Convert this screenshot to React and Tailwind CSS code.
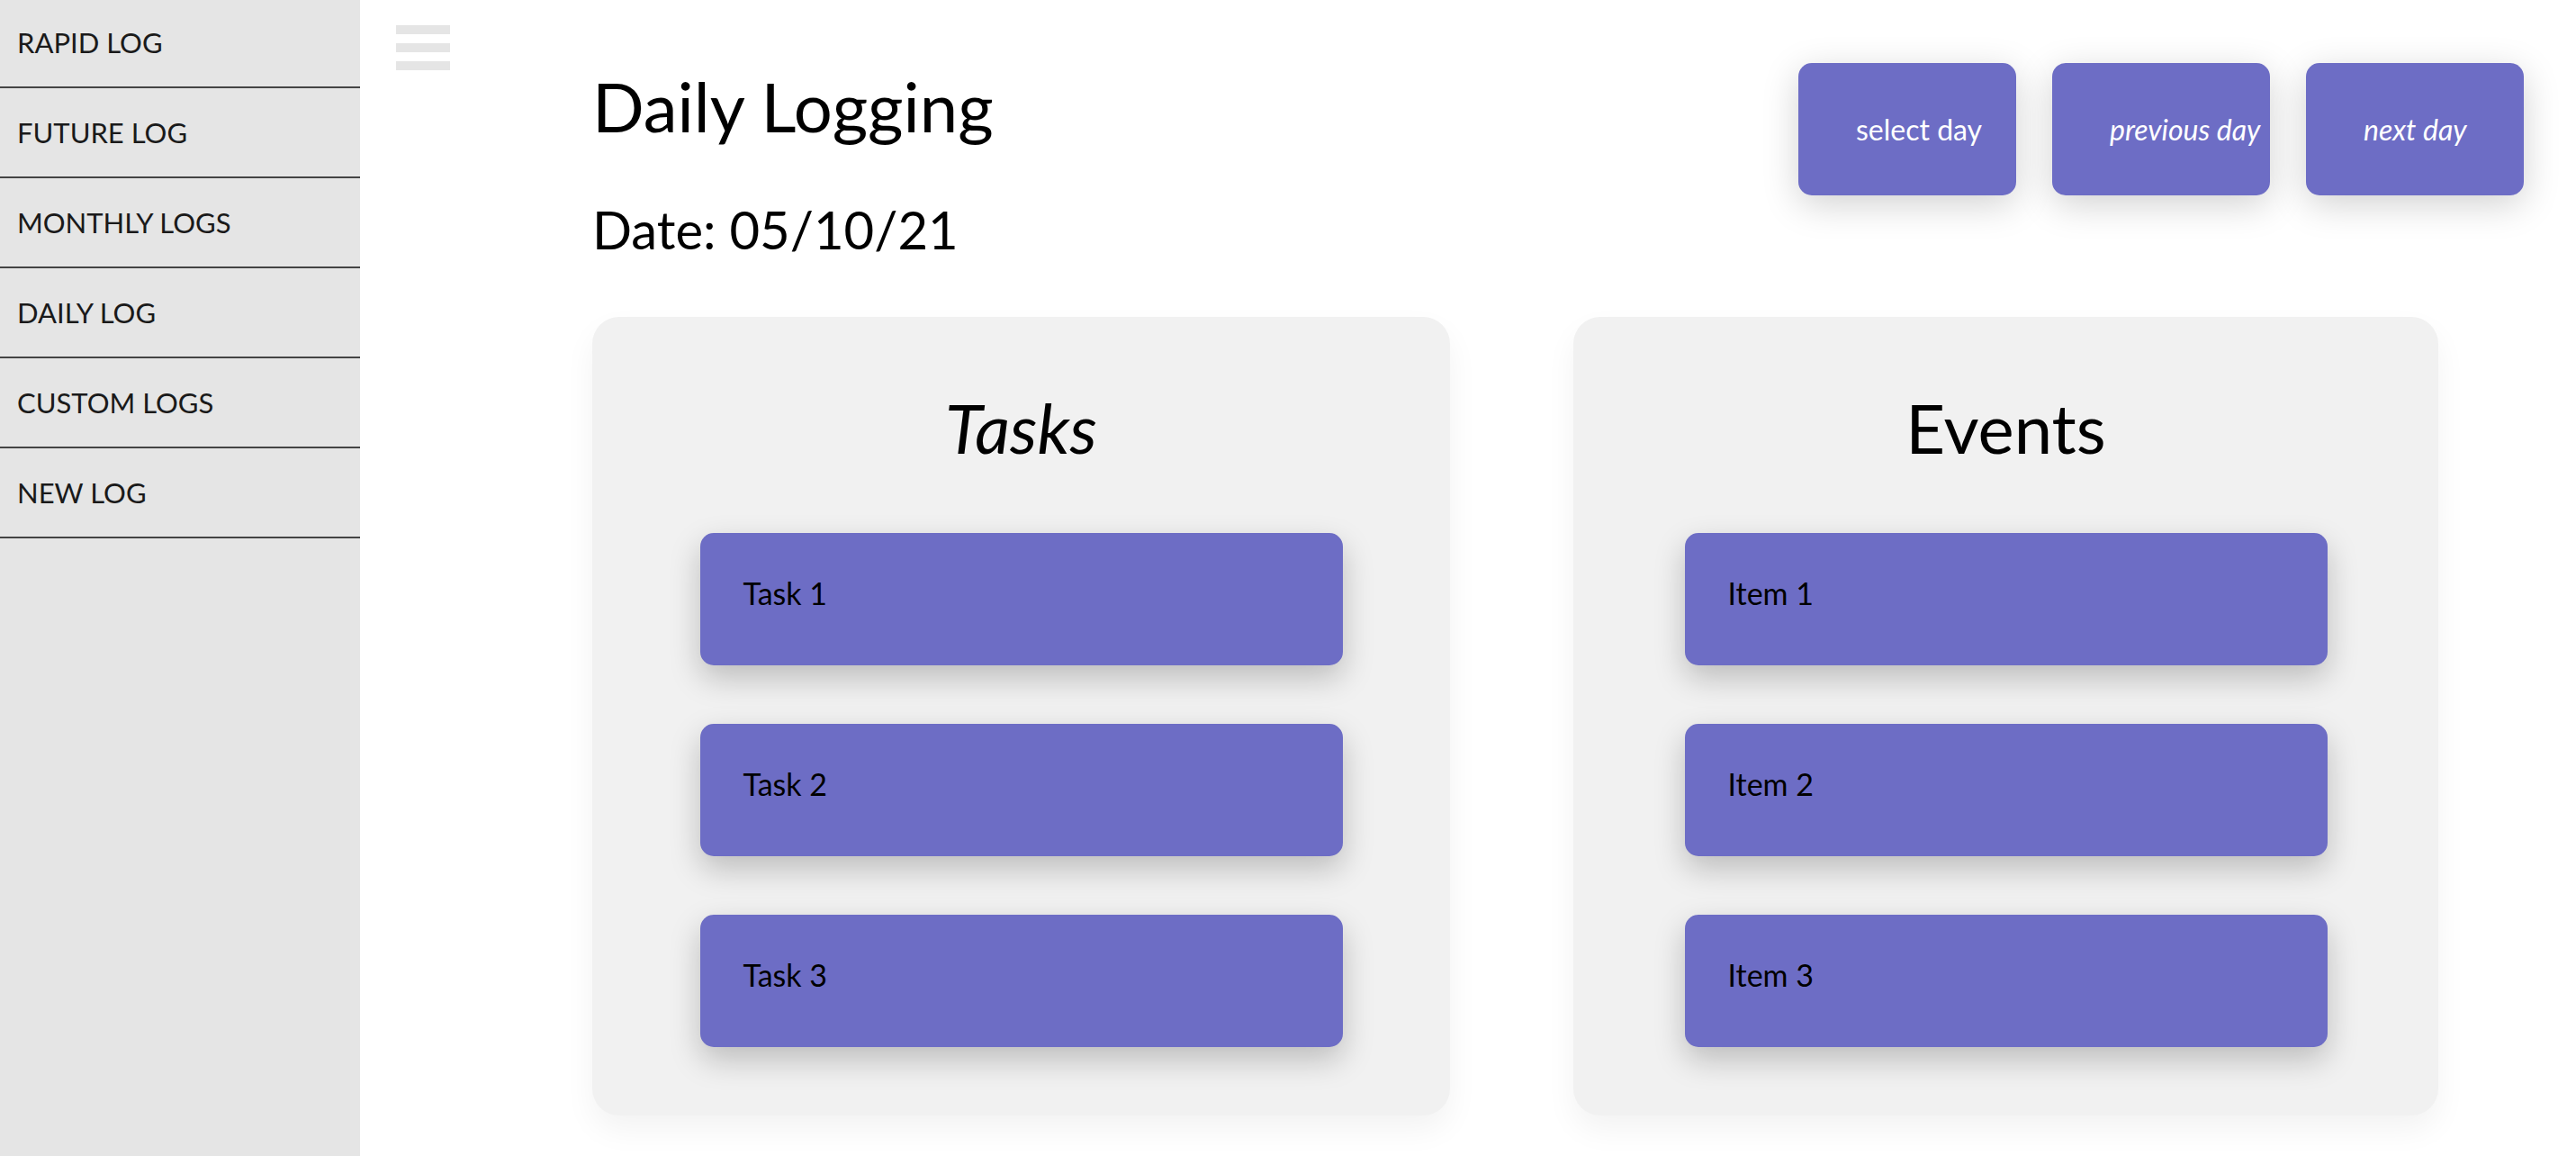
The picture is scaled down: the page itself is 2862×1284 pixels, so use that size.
const navItems = ['RAPID LOG', 'FUTURE LOG', 'MONTHLY LOGS', 'DAILY LOG', 'CUSTOM LOGS', 'NEW LOG'];

const tasks = ['Task 1', 'Task 2', 'Task 3'];
const events = ['Item 1', 'Item 2', 'Item 3'];

function Sidebar() {
  return (
    <aside className="w-[400px] shrink-0 bg-[#e5e5e5] h-full">
      <ul className="-mt-[2px]">
        {navItems.map((item) => (
          <li
            key={item}
            className="h-[100px] flex items-center pl-[19px] border-b-2 border-[#444444] text-[31px] leading-none text-[#1a1a1a]"
          >
            {item}
          </li>
        ))}
      </ul>
    </aside>
  );
}

function Hamburger() {
  return (
    <div className="ml-[40px] mt-[28px] w-[60px] flex flex-col gap-[10px] shrink-0">
      <span className="h-[10px] bg-[#e5e5e5]"></span>
      <span className="h-[10px] bg-[#e5e5e5]"></span>
      <span className="h-[10px] bg-[#e5e5e5]"></span>
    </div>
  );
}

function DayButton({ label, italic }) {
  return (
    <button
      className={`w-[242px] h-[147px] flex items-center pl-[64px] rounded-[15px] bg-[#6d6dc5] text-white text-[32px] leading-none whitespace-nowrap shadow-[0_10px_40px_rgba(0,0,0,0.18)] ${
        italic ? 'italic' : ''
      }`}
    >
      {label}
    </button>
  );
}

function LogCard({ title, items, italic, width }) {
  return (
    <section
      className={`${width} bg-[#f1f1f1] rounded-[30px] pt-[85px] pb-[76px] shadow-[0_16px_34px_rgba(0,0,0,0.05)]`}
    >
      <h2 className={`text-center text-[76px] leading-none text-black ${italic ? 'italic' : ''}`}>{title}</h2>
      <div className="mt-[79px] flex flex-col gap-[65px] items-center">
        {items.map((item) => (
          <div
            key={item}
            className="w-[714px] h-[147px] rounded-[15px] bg-[#6d6dc5] pt-[50px] pl-[48px] text-[34px] leading-none text-black shadow-[0_14px_34px_rgba(0,0,0,0.22)]"
          >
            {item}
          </div>
        ))}
      </div>
    </section>
  );
}

export default function App() {
  return (
    <div className="flex h-[1284px] overflow-hidden bg-white font-['Lato',sans-serif]">
      <Sidebar />
      <main className="flex-1 flex">
        <Hamburger />
        <div className="ml-[158px] flex-1 pr-[58px]">
          <div className="flex justify-between items-start pt-[70px]">
            <div className="mt-[10px]">
              <h1 className="text-[76px] leading-none text-black">Daily Logging</h1>
              <p className="mt-[70px] text-[58px] leading-none text-black">Date: 05/10/21</p>
            </div>
            <div className="flex gap-[40px]">
              <DayButton label="select day" />
              <DayButton label="previous day" italic />
              <DayButton label="next day" italic />
            </div>
          </div>
          <div className="mt-[68px] flex gap-[137px] items-start">
            <LogCard title="Tasks" items={tasks} italic width="w-[953px]" />
            <LogCard title="Events" items={events} width="w-[961px]" />
          </div>
        </div>
      </main>
    </div>
  );
}
